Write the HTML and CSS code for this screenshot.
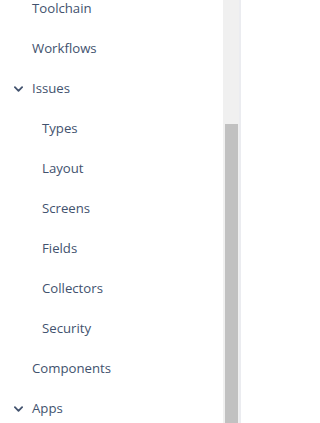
FILE: index.html
```html
<!DOCTYPE html>
<html lang="en">

<head>
    <meta charset="UTF-8">
    <meta name="viewport" content="width=device-width, initial-scale=1.0">
    <title>Project settings</title>
    <link rel="stylesheet" href="styles.css">
</head>

<body>
    <div class="page">
        <aside class="sidebar">
            <ul class="nav">
                <li class="nav-item">Toolchain</li>
                <li class="nav-item">Workflows</li>
                <li class="nav-item group">
                    <svg class="chevron" viewBox="0 0 10 6" width="9" height="6">
                        <path d="M1 1l4 4 4-4" fill="none" stroke="#42526e" stroke-width="2" stroke-linecap="round" stroke-linejoin="round" />
                    </svg>
                    Issues
                </li>
                <li class="nav-item sub">Types</li>
                <li class="nav-item sub">Layout</li>
                <li class="nav-item sub">Screens</li>
                <li class="nav-item sub">Fields</li>
                <li class="nav-item sub">Collectors</li>
                <li class="nav-item sub">Security</li>
                <li class="nav-item">Components</li>
                <li class="nav-item group">
                    <svg class="chevron" viewBox="0 0 10 6" width="9" height="6">
                        <path d="M1 1l4 4 4-4" fill="none" stroke="#42526e" stroke-width="2" stroke-linecap="round" stroke-linejoin="round" />
                    </svg>
                    Apps
                </li>
            </ul>
        </aside>
        <div class="scrollbar">
            <div class="thumb"></div>
        </div>
        <div class="divider"></div>
        <main class="content"></main>
    </div>
</body>

</html>
```

FILE: styles.css
```css
* {
    margin: 0;
    padding: 0;
    box-sizing: border-box;
    font-family: 'Open Sans', 'Noto Sans', sans-serif;
}

body {
    background-color: #fff;
    color: #42526e;
    overflow: hidden;
}

.page {
    display: flex;
    height: 423px;
}

.sidebar {
    width: 223px;
    overflow: hidden;
}

.nav {
    list-style: none;
    margin-top: -12px;
}

.nav-item {
    display: flex;
    align-items: center;
    height: 40px;
    padding-left: 32px;
    font-size: 13.2px;
}

.nav-item.sub {
    padding-left: 42px;
}

.nav-item.group {
    position: relative;
}

.chevron {
    position: absolute;
    left: 14px;
    top: 18px;
}

.scrollbar {
    width: 16px;
    background-color: #f0f0f0;
    padding: 124px 1px 0 2px;
}

.thumb {
    height: 100%;
    background-color: #c1c1c1;
}

.divider {
    width: 2px;
    background-color: #ebecf0;
}

.content {
    flex: 1;
}
```
